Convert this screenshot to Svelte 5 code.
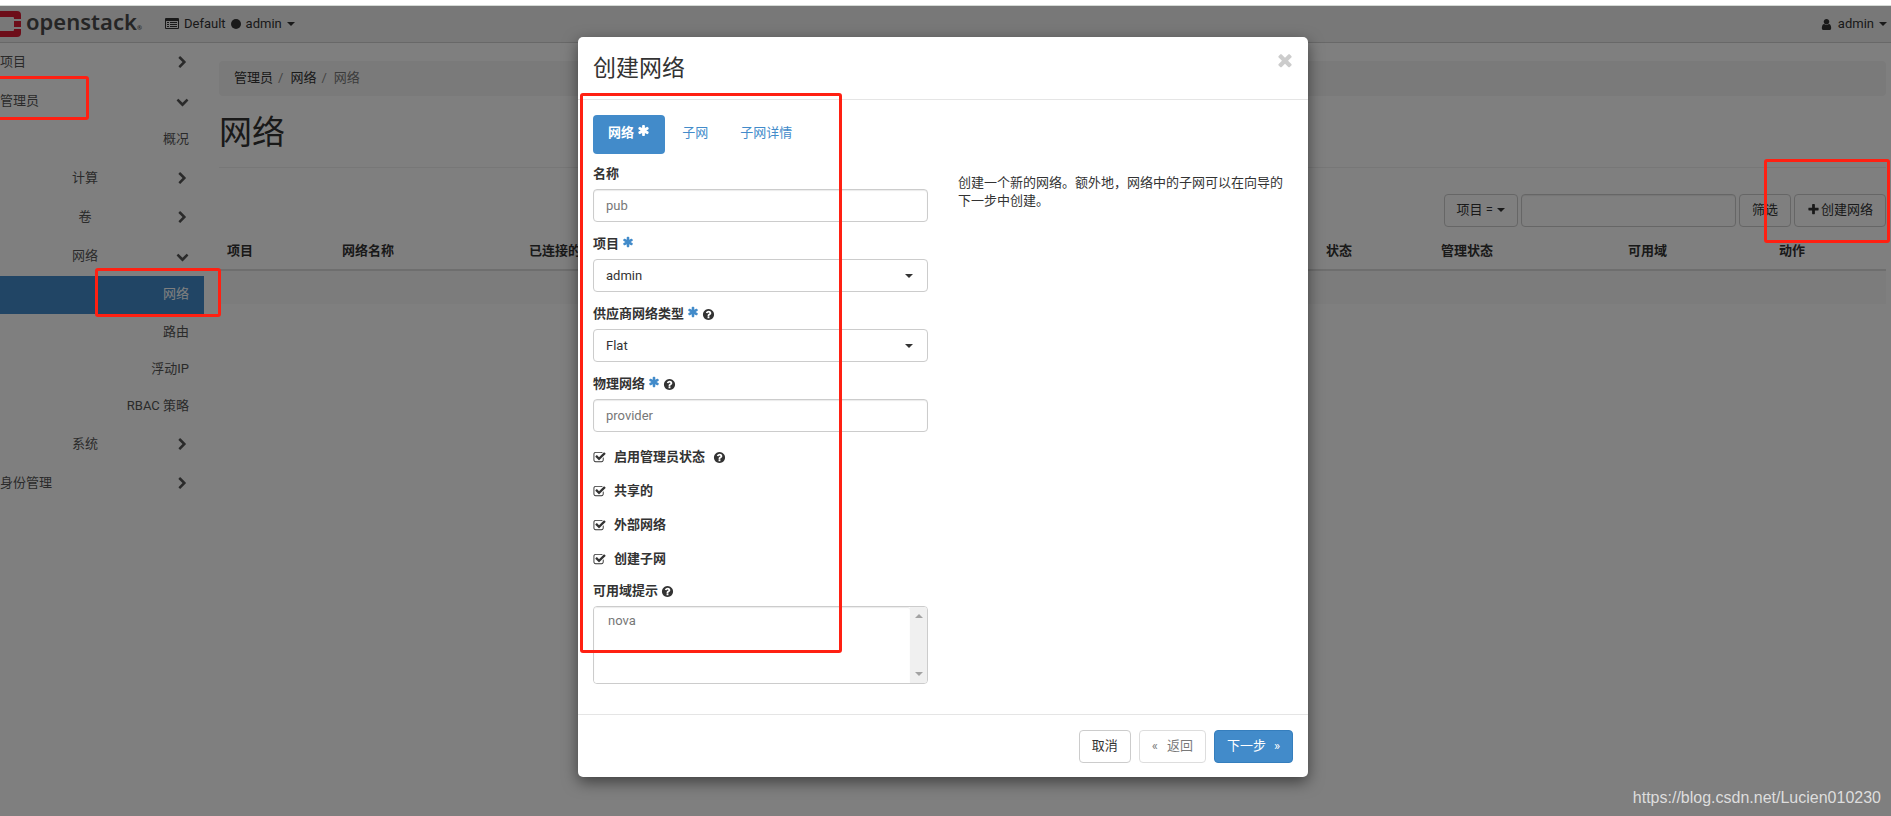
<script lang="ts">
  type MenuItem = {
    label: string;
    level: number;
    kind: "closed" | "open" | "leaf";
    active?: boolean;
  };

  const menu: MenuItem[] = [
    { label: "项目", level: 1, kind: "closed" },
    { label: "管理员", level: 1, kind: "open" },
    { label: "概况", level: 2, kind: "leaf" },
    { label: "计算", level: 2, kind: "closed" },
    { label: "卷", level: 2, kind: "closed" },
    { label: "网络", level: 2, kind: "open" },
    { label: "网络", level: 3, kind: "leaf", active: true },
    { label: "路由", level: 3, kind: "leaf" },
    { label: "浮动IP", level: 3, kind: "leaf" },
    { label: "RBAC 策略", level: 3, kind: "leaf" },
    { label: "系统", level: 2, kind: "closed" },
    { label: "身份管理", level: 1, kind: "closed" },
  ];

  // Font Awesome 4 outlines, all on a 1792 grid
  const icons = {
    right:
      "M1363 877l-742 742q-19 19-45 19t-45-19l-166-166q-19-19-19-45t19-45l531-531-531-531q-19-19-19-45t19-45l166-166q19-19 45-19t45 19l742 742q19 19 19 45t-19 45z",
    down: "M1683 808l-742 741q-19 19-45 19t-45-19l-742-741q-19-19-19-45.5t19-45.5l166-165q19-19 45-19t45 19l531 531 531-531q19-19 45-19t45 19l166 165q19 19 19 45.5t-19 45.5z",
    user: "M1536 1399q0 109-62.5 187t-150.5 78h-854q-88 0-150.5-78t-62.5-187q0-85 8.5-160.5t31.5-152 58.5-131 94-89 134.5-34.5q131 128 313 128t313-128q76 0 134.5 34.5t94 89 58.5 131 31.5 152 8.5 160.5zm-256-887q0 159-112.5 271.5t-271.5 112.5-271.5-112.5-112.5-271.5 112.5-271.5 271.5-112.5 271.5 112.5 112.5 271.5z",
    plus: "M1600 736v192q0 40-28 68t-68 28h-416v416q0 40-28 68t-68 28h-192q-40 0-68-28t-28-68v-416h-416q-40 0-68-28t-28-68v-192q0-40 28-68t68-28h416v-416q0-40 28-68t68-28h192q40 0 68 28t28 68v416h416q40 0 68 28t28 68z",
    times:
      "M1490 1322q0 40-28 68l-136 136q-28 28-68 28t-68-28l-294-294-294 294q-28 28-68 28t-68-28l-136-136q-28-28-28-68t28-68l294-294-294-294q-28-28-28-68t28-68l136-136q28-28 68-28t68 28l294 294 294-294q28-28 68-28t68 28l136 136q28 28 28 68t-28 68l-294 294 294 294q28 28 28 68z",
    asterisk:
      "M1546 1050q46 26 59.5 77.5t-12.5 97.5l-64 110q-26 46-77.5 59.5t-97.5-12.5l-266-153v307q0 52-38 90t-90 38h-128q-52 0-90-38t-38-90v-307l-266 153q-46 26-97.5 12.5t-77.5-59.5l-64-110q-26-46-12.5-97.5t59.5-77.5l266-154-266-154q-46-26-59.5-77.5t12.5-97.5l64-110q26-46 77.5-59.5t97.5 12.5l266 153v-307q0-52 38-90t90-38h128q52 0 90 38t38 90v307l266-153q46-26 97.5-12.5t77.5 59.5l64 110q26 46 12.5 97.5t-59.5 77.5l-266 154z",
    help: "M1024 1376v-192q0-14-9-23t-23-9h-192q-14 0-23 9t-9 23v192q0 14 9 23t23 9h192q14 0 23-9t9-23zm256-672q0-88-55.5-163t-138.5-116-170-41q-243 0-371 213-15 24 8 42l132 100q7 6 19 6 16 0 25-12 53-68 86-92 34-24 86-24 48 0 85.5 26t37.5 59q0 38-20 61t-68 45q-63 28-115.5 86.5t-52.5 125.5v36q0 14 9 23t23 9h192q14 0 23-9t9-23q0-19 21.5-49.5t54.5-49.5q32-18 49-28.5t46-35 44.5-48 28-60.5 12.5-81zm384 192q0 209-103 385.5t-279.5 279.5-385.5 103-385.5-103-279.5-279.5-103-385.5 103-385.5 279.5-279.5 385.5-103 385.5 103 279.5 279.5 103 385.5z",
    check:
      "M1472 930v318q0 119-84.5 203.5t-203.5 84.5h-832q-119 0-203.5-84.5t-84.5-203.5v-832q0-119 84.5-203.5t203.5-84.5h832q63 0 117 25 15 7 18 23 3 17-9 29l-49 49q-10 10-23 10-3 0-9-2-23-6-45-6h-832q-66 0-113 47t-47 113v832q0 66 47 113t113 47h832q66 0 113-47t47-113v-254q0-13 9-22l64-64q10-10 23-10 6 0 12 3 20 8 20 29zm231-489l-814 814q-24 24-57 24t-57-24l-430-430q-24-24-24-57t24-57l110-110q24-24 57-24t57 24l263 263 647-647q24-24 57-24t57 24l110 110q24 24 24 57t-24 57z",
  };

  let name = $state("pub");
  let physical = $state("provider");
  let filter = $state("");
  let project = $state("admin");
  let networkType = $state("Flat");

  let options = $state([
    { id: "admin-state", label: "启用管理员状态", checked: true, help: true },
    { id: "shared", label: "共享的", checked: true, help: false },
    { id: "external", label: "外部网络", checked: true, help: false },
    { id: "with-subnet", label: "创建子网", checked: true, help: false },
  ]);
</script>

{#snippet icon(shape: keyof typeof icons)}
  <svg class="icon {shape}" viewBox="0 0 1792 1792" aria-hidden="true">
    <path d={icons[shape]} />
  </svg>
{/snippet}

<div class="page">
  <header class="topbar">
    <a class="brand" href="#home">
      <svg class="mark" viewBox="0 0 21 26" aria-hidden="true">
        <path
          d="M0 0H17Q21 0 21 4V8H14V7Q14 6 13 6H0ZM14 10H21V16H14ZM14 18H21V22Q21 26 17 26H0V20H13Q14 20 14 19Z"
        />
      </svg>
      <span class="wordmark">openstack<small>®</small></span>
    </a>
    <button class="context" type="button">
      <svg class="list" viewBox="0 0 14 12" aria-hidden="true">
        <path
          fill-rule="evenodd"
          d="M1 0H13Q14 0 14 1V10Q14 11 13 11H1Q0 11 0 10V1Q0 0 1 0ZM1 3V10H13V3ZM2 4H4V5H2ZM5 4H12V5H5ZM2 6H4V7H2ZM5 6H12V7H5ZM2 8H4V9H2ZM5 8H12V9H5Z"
        />
      </svg>
      <span>Default</span>
      <span class="dot"></span>
      <span>admin</span>
      <span class="caret"></span>
    </button>
    <button class="user-menu" type="button">
      {@render icon("user")}
      <span>admin</span>
      <span class="caret"></span>
    </button>
  </header>

  <div class="columns">
    <nav class="sidebar">
      {#each menu as item}
        <a
          href="#menu"
          class="level-{item.level} {item.kind}"
          class:active={item.active}
        >
          <span>{item.label}</span>
          {#if item.kind === "closed"}
            {@render icon("right")}
          {:else if item.kind === "open"}
            {@render icon("down")}
          {/if}
        </a>
      {/each}
    </nav>

    <main>
      <ol class="breadcrumb">
        <li><a href="#admin">管理员</a></li>
        <li><a href="#network">网络</a></li>
        <li class="current">网络</li>
      </ol>
      <h1>网络</h1>
      <div class="toolbar">
        <button class="btn" type="button">项目 = <span class="caret"></span></button>
        <input type="text" aria-label="筛选" bind:value={filter} />
        <button class="btn" type="button">筛选</button>
        <button class="btn create" type="button">{@render icon("plus")} 创建网络</button>
      </div>
      <table>
        <thead>
          <tr>
            <th class="narrow">项目</th>
            <th class="wide">网络名称</th>
            <th>已连接的</th>
            <th class="narrow">状态</th>
            <th class="wide">管理状态</th>
            <th class="medium">可用域</th>
            <th class="narrow">动作</th>
          </tr>
        </thead>
        <tbody>
          <tr><td colspan="7"></td></tr>
        </tbody>
      </table>
    </main>
  </div>

  <div class="backdrop">
    <div class="modal" role="dialog" aria-modal="true" aria-labelledby="modal-title">
      <div class="modal-header">
        <h2 id="modal-title">创建网络</h2>
        <button class="close" type="button" aria-label="关闭">{@render icon("times")}</button>
      </div>

      <div class="modal-body">
        <div class="tabs">
          <button class="tab selected" type="button">网络 {@render icon("asterisk")}</button>
          <button class="tab" type="button">子网</button>
          <button class="tab" type="button">子网详情</button>
        </div>

        <div class="split">
          <form>
            <div class="field">
              <label for="name">名称</label>
              <input id="name" type="text" bind:value={name} />
            </div>
            <div class="field">
              <label for="project">项目 {@render icon("asterisk")}</label>
              <div class="select">
                <select id="project" bind:value={project}>
                  <option>admin</option>
                </select>
                <span class="caret"></span>
              </div>
            </div>
            <div class="field">
              <label for="type">供应商网络类型 {@render icon("asterisk")}{@render icon("help")}</label>
              <div class="select">
                <select id="type" bind:value={networkType}>
                  <option>Flat</option>
                </select>
                <span class="caret"></span>
              </div>
            </div>
            <div class="field">
              <label for="physical">物理网络 {@render icon("asterisk")}{@render icon("help")}</label>
              <input id="physical" type="text" bind:value={physical} />
            </div>

            {#each options as option}
              <div class="check-row">
                <input id={option.id} type="checkbox" bind:checked={option.checked} />
                <label for={option.id}>
                  {@render icon("check")}
                  <span>{option.label}</span>
                  {#if option.help}{@render icon("help")}{/if}
                </label>
              </div>
            {/each}

            <div class="field zones">
              <label for="zones">可用域提示 {@render icon("help")}</label>
              <div class="listbox">
                <select id="zones" multiple>
                  <option>nova</option>
                </select>
                <div class="scroll" aria-hidden="true">
                  <span class="arrow-up"></span>
                  <span class="arrow-down"></span>
                </div>
              </div>
            </div>
          </form>
          <p class="hint">
            创建一个新的网络。额外地，网络中的子网可以在向导的下一步中创建。
          </p>
        </div>
      </div>

      <div class="modal-footer">
        <button class="btn" type="button">取消</button>
        <button class="btn back" type="button" disabled><span>«</span>返回</button>
        <button class="btn primary" type="button">下一步<span>»</span></button>
      </div>

      <div class="marker mark-form"></div>
    </div>
  </div>

  <div class="marker mark-admin"></div>
  <div class="marker mark-network"></div>
  <div class="marker mark-create"></div>
  <div class="watermark">https://blog.csdn.net/Lucien010230</div>
</div>

<style>
  :global(body) {
    background: #fff;
  }

  .page,
  .page :global(*) {
    box-sizing: border-box;
  }

  .page {
    position: relative;
    margin-top: 5px;
    min-height: calc(100vh - 5px);
    border-top: 1px solid #d5dad6;
    overflow: hidden;
    color: #333;
    font: 13px/18px Roboto, "Noto Sans CJK SC", sans-serif;
  }

  button,
  input,
  select {
    margin: 0;
    font: inherit;
    color: inherit;
  }

  button {
    border: 0;
    padding: 0;
    background: none;
    cursor: pointer;
  }

  a {
    color: inherit;
    text-decoration: none;
  }

  .icon {
    width: 13px;
    height: 13px;
    flex: none;
    fill: currentColor;
  }

  .caret {
    display: inline-block;
    border: 4px solid transparent;
    border-top-color: currentColor;
    border-bottom: 0;
  }

  .topbar {
    display: flex;
    align-items: center;
    height: 37px;
    padding-right: 4px;
    border-bottom: 1px solid #d0d0d0;
    background: #f0f0f0;
  }

  .brand {
    display: flex;
    align-items: center;
    gap: 5px;
    width: 165px;
    color: #4b4b4b;
  }

  .mark {
    width: 21px;
    height: 26px;
    fill: #da1a32;
  }

  .wordmark {
    font: 600 22px/26px "Noto Sans", sans-serif;
  }

  .wordmark small {
    font-size: 6px;
  }

  .context,
  .user-menu {
    display: flex;
    align-items: center;
    gap: 5px;
  }

  .list {
    width: 14px;
    height: 12px;
    fill: currentColor;
  }

  .dot {
    width: 10px;
    height: 10px;
    border-radius: 50%;
    background: currentColor;
  }

  .user-menu {
    margin-left: auto;
  }

  .columns {
    display: flex;
  }

  .sidebar {
    flex: none;
    width: 204px;
    color: #555;
  }

  .sidebar a {
    display: grid;
    grid-template-columns: 170px auto;
    justify-content: space-between;
    align-items: center;
    height: 39px;
    padding-right: 15px;
  }

  .sidebar span {
    padding-bottom: 2px;
  }

  .sidebar .level-2 {
    text-align: center;
  }

  .sidebar .leaf {
    grid-template-columns: auto;
    justify-content: end;
    height: 37px;
  }

  .sidebar .level-2.leaf,
  .sidebar .active {
    height: 38px;
  }

  .sidebar .active {
    background: #428bca;
    color: #fff;
  }

  main {
    flex: 1;
    min-width: 0;
    padding: 18px 5px 0 15px;
  }

  .breadcrumb {
    display: flex;
    margin: 0;
    padding: 8px 15px 9px;
    border-radius: 4px;
    background: #f5f5f5;
    list-style: none;
  }

  .breadcrumb li + li::before {
    content: "/";
    padding: 0 7px 0 5px;
    color: #888;
  }

  .breadcrumb .current {
    color: #777;
  }

  h1 {
    margin: 0;
    padding: 16px 0 14px;
    border-bottom: 1px solid #eee;
    font-size: 33px;
    font-weight: 400;
    line-height: 41px;
  }

  .toolbar {
    display: flex;
    justify-content: flex-end;
    gap: 3px;
    padding: 26px 0 8px;
  }

  .btn {
    display: inline-flex;
    align-items: center;
    gap: 4px;
    height: 33px;
    padding: 0 12px 2px;
    border: 1px solid #ccc;
    border-radius: 4px;
    background: #fff;
  }

  .create {
    gap: 1px;
  }

  input[type="text"] {
    display: block;
    height: 33px;
    padding: 0 12px;
    border: 1px solid #ccc;
    border-radius: 4px;
    background: #fff;
    color: #777;
    box-shadow: inset 0 1px 1px rgba(0, 0, 0, 0.08);
  }

  .toolbar input {
    width: 215px;
  }

  table {
    width: 100%;
    border-collapse: collapse;
    table-layout: fixed;
  }

  th {
    height: 35px;
    padding: 0 8px 3px;
    border-bottom: 2px solid #ddd;
    text-align: left;
  }

  td {
    height: 34px;
    background: #f9f9f9;
  }

  .narrow {
    width: 115px;
  }

  .medium {
    width: 151px;
  }

  .wide {
    width: 187px;
  }

  .backdrop {
    position: absolute;
    inset: 0;
    padding: 31px 5px 0 0;
    background: rgba(0, 0, 0, 0.5);
  }

  .modal {
    position: relative;
    max-width: 730px;
    margin: 0 auto;
    border-radius: 5px;
    background: #fff;
    box-shadow: 0 5px 15px rgba(0, 0, 0, 0.5);
  }

  .modal-header {
    display: flex;
    justify-content: space-between;
    align-items: flex-start;
    padding: 13px 13px 14px 15px;
    border-bottom: 1px solid #e5e5e5;
  }

  h2 {
    margin: 0;
    padding-top: 3px;
    font-size: 23px;
    font-weight: 400;
    line-height: 32px;
  }

  .close {
    color: #ccc;
  }

  .close .icon {
    display: block;
    width: 20px;
    height: 20px;
  }

  .modal-body {
    padding: 15px 15px 30px;
  }

  .tabs {
    display: flex;
    gap: 2px;
  }

  .tab {
    height: 39px;
    padding: 0 15px 3px;
    border-radius: 4px;
    color: #428bca;
  }

  .tab.selected {
    background: #428bca;
    color: #fff;
    font-weight: 700;
  }

  .split {
    display: grid;
    grid-template-columns: 1fr 1fr;
    gap: 30px;
  }

  form {
    padding-top: 11px;
  }

  .field {
    margin-bottom: 8px;
  }

  .field + .field {
    margin-top: 13px;
  }

  .field label {
    display: flex;
    align-items: center;
    gap: 3px;
    height: 18px;
    margin-bottom: 6px;
    font-weight: 700;
  }

  .field input {
    width: 100%;
  }

  .asterisk {
    align-self: flex-start;
    color: #428bca;
  }

  .selected .asterisk {
    color: #fff;
  }

  .field .asterisk {
    width: 12px;
    height: 14px;
  }

  .select {
    display: grid;
    align-items: center;
  }

  .select > * {
    grid-area: 1 / 1;
  }

  .select select {
    width: 100%;
    height: 33px;
    padding: 0 12px;
    border: 1px solid #ccc;
    border-radius: 4px;
    background: #fff;
    appearance: none;
  }

  .select .caret {
    justify-self: end;
    margin-right: 15px;
    pointer-events: none;
  }

  .check-row {
    display: flex;
    position: relative;
    height: 34px;
    align-items: center;
    font-weight: 700;
  }

  /* the native box sits unseen over the drawn one */
  .check-row input {
    position: absolute;
    width: 13px;
    height: 13px;
    opacity: 0;
  }

  .check-row input:not(:checked) + label .check {
    opacity: 0.4;
  }

  .check-row label {
    display: flex;
    align-items: center;
    gap: 8px;
  }

  .zones {
    margin: 6px 0 0;
  }

  .listbox {
    display: flex;
    height: 78px;
    border: 1px solid #ccc;
    border-radius: 4px;
    overflow: hidden;
  }

  .listbox select {
    flex: 1;
    padding: 6px 12px;
    border: 0;
    outline: 0;
    background: #fff;
    color: #777;
    overflow: hidden;
    box-shadow: inset 0 1px 1px rgba(0, 0, 0, 0.08);
  }

  .scroll {
    display: flex;
    flex-direction: column;
    justify-content: space-between;
    align-items: center;
    width: 17px;
    padding: 7px 0;
    background: #f0f0f0;
  }

  .arrow-up,
  .arrow-down {
    border: 4px solid transparent;
  }

  .arrow-up {
    border-top: 0;
    border-bottom-color: #a3a3a3;
  }

  .arrow-down {
    border-bottom: 0;
    border-top-color: #a3a3a3;
  }

  .hint {
    margin: 20px 0 0;
  }

  .modal-footer {
    display: flex;
    justify-content: flex-end;
    gap: 8px;
    padding: 15px 15px 14px;
    border-top: 1px solid #e5e5e5;
  }

  .back {
    gap: 9px;
    opacity: 0.65;
  }

  .primary {
    gap: 8px;
    border-color: #357ebd;
    background: #428bca;
    color: #fff;
  }

  /* red highlight frames */
  .marker {
    position: absolute;
    border: 3px solid #ff2012;
    border-radius: 3px;
    pointer-events: none;
  }

  .mark-form {
    top: 56px;
    left: 2px;
    width: 262px;
    height: 560px;
  }

  .mark-admin {
    top: 70px;
    left: -4px;
    width: 93px;
    height: 44px;
  }

  .mark-network {
    top: 262px;
    left: 95px;
    width: 126px;
    height: 49px;
  }

  .mark-create {
    top: 153px;
    right: 1px;
    width: 126px;
    height: 84px;
  }

  .watermark {
    position: absolute;
    right: 10px;
    bottom: 8px;
    color: #ddd;
    font: 16px/20px "Liberation Sans", Arial, sans-serif;
  }
</style>
